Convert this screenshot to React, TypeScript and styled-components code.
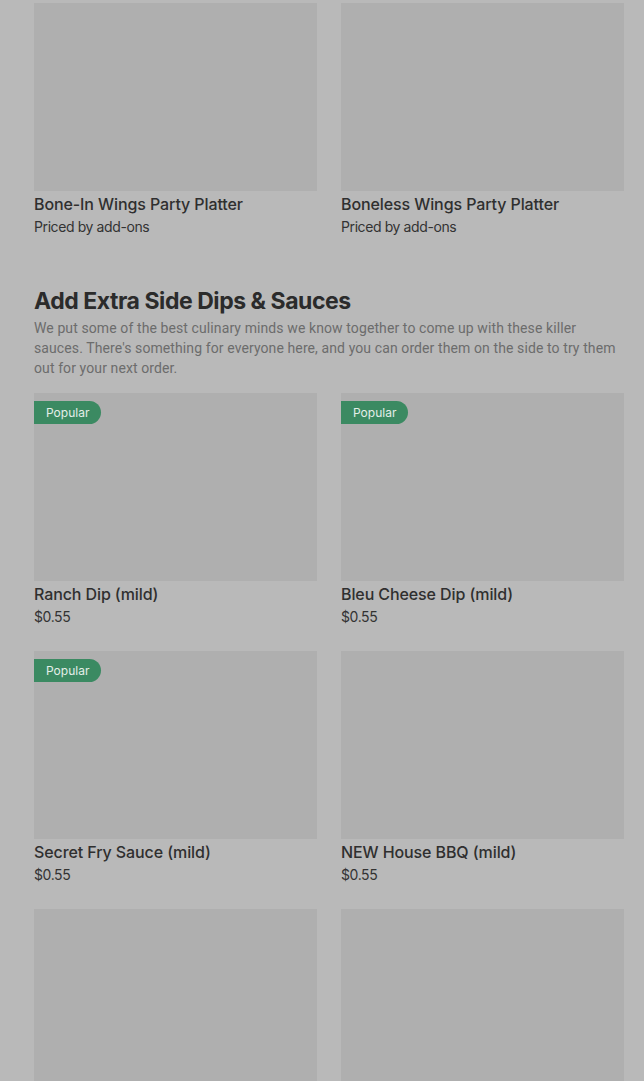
import React from 'react';
import styled, { createGlobalStyle } from 'styled-components';

const GlobalStyle = createGlobalStyle`
  html, body {
    margin: 0;
    padding: 0;
    background: #b9b9b9;
  }
  body {
    font-family: Inter, "Noto Sans", Roboto, sans-serif;
    color: #2f2f2f;
  }
`;

const Page = styled.div`
  padding: 3px 20px 0 34px;
  min-height: 1081px;
  box-sizing: border-box;
`;

const Grid = styled.div`
  display: grid;
  grid-template-columns: 283px 283px;
  column-gap: 24px;
  row-gap: 24px;
`;

const Section = styled.section`
  margin-top: 48px;
`;

const SectionTitle = styled.h2`
  margin: 0;
  font-size: 23px;
  line-height: 32px;
  font-weight: 700;
  letter-spacing: -0.45px;
  color: #2b2b2b;
`;

const SectionDescription = styled.p`
  margin: 1px 0 15px;
  font-family: Roboto, "Liberation Sans", sans-serif;
  font-size: 14px;
  line-height: 20px;
  color: #6c6c6c;
  letter-spacing: 0.1px;
`;

const Card = styled.div`
  display: flex;
  flex-direction: column;
`;

const ImageBox = styled.div`
  position: relative;
  height: 188px;
  background: #afafaf;
`;

const Badge = styled.span`
  position: absolute;
  top: 8px;
  left: 0;
  height: 23px;
  padding: 0 12px;
  display: flex;
  align-items: center;
  background: #3b8a62;
  color: #e4eee8;
  font-size: 12px;
  border-radius: 0 12px 12px 0;
`;

const ItemName = styled.div`
  margin-top: 2px;
  font-size: 16px;
  line-height: 22px;
  font-weight: 500;
  color: #2f2f2f;
  letter-spacing: -0.1px;
`;

const ItemPrice = styled.div`
  margin-top: 2px;
  font-size: 14px;
  line-height: 20px;
  color: #333;
  letter-spacing: -0.4px;
`;

interface Item {
  name: string;
  price: string;
  popular?: boolean;
}

const platters: Item[] = [
  { name: 'Bone-In Wings Party Platter', price: 'Priced by add-ons' },
  { name: 'Boneless Wings Party Platter', price: 'Priced by add-ons' },
];

const sauces: Item[] = [
  { name: 'Ranch Dip (mild)', price: '$0.55', popular: true },
  { name: 'Bleu Cheese Dip (mild)', price: '$0.55', popular: true },
  { name: 'Secret Fry Sauce (mild)', price: '$0.55', popular: true },
  { name: 'NEW House BBQ (mild)', price: '$0.55' },
  { name: '', price: '' },
  { name: '', price: '' },
];

const ItemCard: React.FC<{ item: Item }> = ({ item }) => (
  <Card>
    <ImageBox>{item.popular && <Badge>Popular</Badge>}</ImageBox>
    {item.name && <ItemName>{item.name}</ItemName>}
    {item.price && <ItemPrice>{item.price}</ItemPrice>}
  </Card>
);

export default function App() {
  return (
    <>
      <GlobalStyle />
      <Page>
        <Grid>
          {platters.map((p) => (
            <ItemCard key={p.name} item={p} />
          ))}
        </Grid>
        <Section>
          <SectionTitle>Add Extra Side Dips &amp; Sauces</SectionTitle>
          <SectionDescription>
            We put some of the best culinary minds we know together to come up with these killer
            sauces. There's something for everyone here, and you can order them on the side to try them
            out for your next order.
          </SectionDescription>
          <Grid>
            {sauces.map((s, i) => (
              <ItemCard key={i} item={s} />
            ))}
          </Grid>
        </Section>
      </Page>
    </>
  );
}
